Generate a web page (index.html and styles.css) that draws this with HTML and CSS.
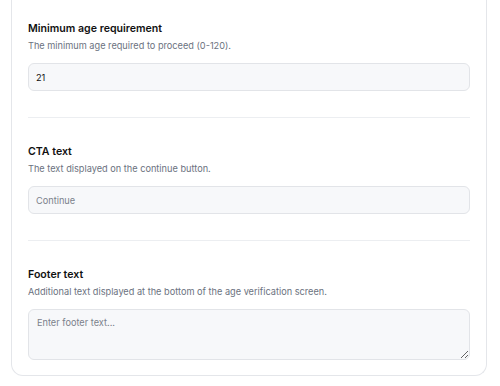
FILE: index.html
```html
<!DOCTYPE html>
<html lang="en">
<head>
    <meta charset="UTF-8">
    <meta name="viewport" content="width=device-width, initial-scale=1.0">
    <title>Age verification settings</title>
    <link rel="stylesheet" href="styles.css">
</head>
<body>
    <div class="card">
        <div class="field">
            <h3 class="field-title">Minimum age requirement</h3>
            <p class="field-desc">The minimum age required to proceed (0-120).</p>
            <input class="field-input" type="number" value="21">
        </div>
        <hr class="divider">
        <div class="field">
            <h3 class="field-title">CTA text</h3>
            <p class="field-desc">The text displayed on the continue button.</p>
            <input class="field-input" type="text" placeholder="Continue">
        </div>
        <hr class="divider">
        <div class="field">
            <h3 class="field-title">Footer text</h3>
            <p class="field-desc">Additional text displayed at the bottom of the age verification screen.</p>
            <textarea class="field-input field-area" placeholder="Enter footer text..."></textarea>
        </div>
    </div>
</body>
</html>
```

FILE: styles.css
```css
body {
    font-family: Inter, "Noto Sans", sans-serif;
    background-color: #fff;
    color: #111;
    margin: 0;
    padding: 0 13px 0 11px;
}
.card {
    border: 1px solid #e4e6ea;
    border-top: none;
    border-radius: 0 0 12px 12px;
    padding: 20px 16px 15px;
}
.field-title {
    font-size: 10.6px;
    font-weight: 600;
    line-height: 18px;
    margin: 0;
}
.field-desc {
    font-size: 9.2px;
    line-height: 16px;
    color: #6b7280;
    margin: 0 0 9px;
}
.field-input {
    display: block;
    box-sizing: border-box;
    width: 100%;
    height: 28px;
    margin: 0;
    padding: 0 7px;
    font-family: inherit;
    font-size: 9.2px;
    color: #111;
    background: #f7f8fa;
    border: 1px solid #e2e4e8;
    border-radius: 6px;
    outline: none;
}
.field-input::placeholder {
    color: #7b818b;
}
.field-input::-webkit-outer-spin-button,
.field-input::-webkit-inner-spin-button {
    -webkit-appearance: none;
}
.field-area {
    height: 51px;
    padding: 7px 8px;
    resize: vertical;
}
.divider {
    border: none;
    border-top: 1px solid #eceef1;
    margin: 26px 0 25px;
}
```
